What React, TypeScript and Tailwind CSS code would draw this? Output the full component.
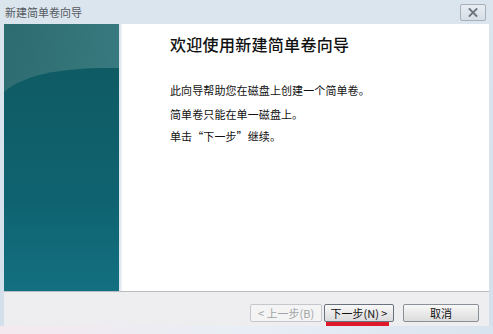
import React from "react";

const cjk = { fontFamily: '"Noto Sans CJK SC", "Noto Sans", sans-serif' };

function TealPanel() {
  return (
    <svg width="115" height="267" viewBox="0 0 115 267" preserveAspectRatio="none" className="block">
      <defs>
        <linearGradient id="top" x1="0" y1="0" x2="1" y2="0.4">
          <stop offset="0" stopColor="#2d6c70" />
          <stop offset="1" stopColor="#387b80" />
        </linearGradient>
        <linearGradient id="low" x1="0" y1="0" x2="0" y2="1">
          <stop offset="0" stopColor="#0f5b64" />
          <stop offset="0.6" stopColor="#0f6370" />
          <stop offset="1" stopColor="#137080" />
        </linearGradient>
      </defs>
      <rect x="0" y="0" width="115" height="267" fill="url(#top)" />
      <path d="M0 68 C 20 50, 60 43, 115 44 L115 267 L0 267 Z" fill="url(#low)" />
    </svg>
  );
}

export default function App() {
  return (
    <div className="w-[493px] h-[334px] overflow-hidden flex flex-col bg-gradient-to-b from-[#dbe5ee] to-[#d3dfea]" style={cjk}>
      <div className="h-[24px] flex items-center justify-between pl-[5px] pr-[7px]">
        <span className="text-[11px] text-[#555a60] leading-none">新建简单卷向导</span>
        <div className="w-[26px] h-[17px] border border-[#a7b0ba] rounded-[2px] bg-gradient-to-b from-[#e8edf2] to-[#d6dee6] flex items-center justify-center">
          <svg width="10" height="9" viewBox="0 0 10 9">
            <path d="M1.5 1 L8.5 8 M8.5 1 L1.5 8" stroke="#6b737d" strokeWidth="1.8" strokeLinecap="square" />
          </svg>
        </div>
      </div>
      <div className="h-[267px] mx-[4px] flex">
        <TealPanel />
        <div className="w-[3px] bg-gradient-to-r from-[#d8e4ee] to-[#eef3f8]" />
        <div className="flex-1 bg-white pl-[48px] pt-[10px] text-[#111]">
          <div className="text-[16px] leading-[20px] font-medium tracking-[0.3px]">欢迎使用新建简单卷向导</div>
          <div className="mt-[29px] text-[11px] leading-[14px] tracking-[0.1px]">此向导帮助您在磁盘上创建一个简单卷。</div>
          <div className="mt-[10px] text-[11px] leading-[14px] tracking-[0.1px]">简单卷只能在单一磁盘上。</div>
          <div className="mt-[8px] text-[11px] leading-[14px] tracking-[0.1px]">单击“下一步”继续。</div>
        </div>
      </div>
      <div className="h-[1px] mx-[4px] bg-[#b9bcc0]" />
      <div className="h-[34px] mx-[4px] bg-[#eeeef1] flex justify-end items-start pt-[12px] pr-[10px]">
        <div className="w-[72px] h-[18px] border border-[#c4c8cc] rounded-[2px] bg-[#f4f4f4] flex items-center justify-center text-[11px] text-[#a0a4a8] leading-none">
          &lt; 上一步(B)
        </div>
        <div className="ml-[2px] flex flex-col items-center">
          <div className="w-[70px] h-[18px] border border-[#6a7280] rounded-[2px] bg-gradient-to-b from-[#f8f8f8] to-[#dcdcdc] flex items-center justify-center text-[11px] text-[#111] leading-none">
            下一步(N) &gt;
          </div>
          <div className="w-[63px] h-[4px] bg-[#e0192a] -ml-[4px]" />
        </div>
        <div className="ml-[9px] w-[76px] h-[18px] border border-[#8a9098] rounded-[2px] bg-gradient-to-b from-[#f8f8f8] to-[#dcdcdc] flex items-center justify-center text-[11px] text-[#111] leading-none">
          取消
        </div>
      </div>
      <div className="flex-1 bg-gradient-to-r from-[#f4e9ee] via-[#e9eef6] to-[#d8e4ef]" />
    </div>
  );
}
